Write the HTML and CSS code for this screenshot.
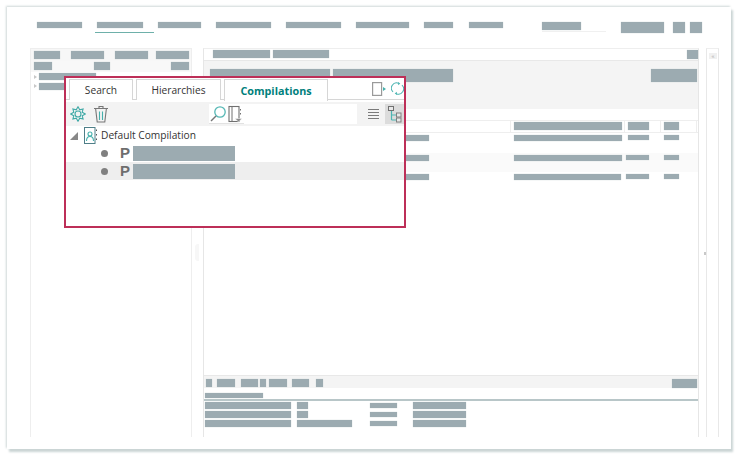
FILE: index.html
```html
<!DOCTYPE html>
<html lang="en">
<head>
<meta charset="utf-8">
<title>Compilations</title>
<link rel="stylesheet" href="styles.css">
</head>
<body>
<div class="window">
  <header class="nav">
    <span class="bar h6 w45"></span>
    <span class="nav-active"><span class="bar h6 w46"></span></span>
    <span class="bar h6 w43 ml15"></span>
    <span class="bar h6 w55 ml15"></span>
    <span class="bar h6 w55 ml15"></span>
    <span class="bar h6 w53 ml15"></span>
    <span class="bar h6 w29 ml15"></span>
    <span class="bar h6 w34 ml16"></span>
    <span class="nav-search"><span class="bar h8 w39"></span></span>
    <span class="bar h11 w43 ml15"></span>
    <span class="bar h11 w12 ml9"></span>
    <span class="bar h11 w12 ml5"></span>
  </header>
  <main class="main">
    <aside class="left">
      <div class="left-tabs">
        <span class="bar h8 w26"></span>
        <span class="bar h8 w33 ml11"></span>
        <span class="bar h8 w33 ml11"></span>
        <span class="bar h8 w33 ml8"></span>
      </div>
      <div class="left-filter">
        <span class="bar h8 w18"></span>
        <span class="bar h8 w16 ml42"></span>
        <span class="bar h8 w18 ml61"></span>
      </div>
      <div class="left-row"><i class="tri"></i><span class="bar h7 w57"></span></div>
      <div class="left-row"><i class="tri"></i><span class="bar h7 w57"></span></div>
    </aside>
    <div class="split"><i class="handle"></i></div>
    <section class="center">
      <div class="c-head">
        <span class="bar h8 w57 ml9"></span>
        <span class="bar h8 w56 ml3"></span>
        <span class="bar h9 w11 push"></span>
      </div>
      <div class="c-band">
        <span class="bar h13 w120"></span>
        <span class="bar h13 w120 ml3"></span>
        <span class="bar h13 w46 push"></span>
      </div>
      <div class="c-gap"></div>
      <div class="t-head">
        <span class="cell c1"></span>
        <span class="cell c2"><span class="bar h8 w108"></span></span>
        <span class="cell c3"><span class="bar h8 w21"></span></span>
        <span class="cell c4"><span class="bar h8 w15"></span></span>
      </div>
      <div class="t-row">
        <span class="cell c1"><span class="bar h6 w29 ml196"></span></span>
        <span class="cell c2"><span class="bar h6 w108"></span></span>
        <span class="cell c3"><span class="bar h5 w21"></span></span>
        <span class="cell c4"><span class="bar h5 w15"></span></span>
      </div>
      <div class="t-row alt">
        <span class="cell c1"><span class="bar h6 w29 ml196"></span></span>
        <span class="cell c2"><span class="bar h6 w108"></span></span>
        <span class="cell c3w"><span class="bar h5 w23"></span></span>
        <span class="cell c4"><span class="bar h5 w15"></span></span>
      </div>
      <div class="t-row">
        <span class="cell c1"><span class="bar h6 w29 ml196"></span></span>
        <span class="cell c2"><span class="bar h6 w107"></span></span>
        <span class="cell c3w"><span class="bar h5 w23"></span></span>
        <span class="cell c4"><span class="bar h5 w15"></span></span>
      </div>
      <div class="c-fill"></div>
      <div class="pager">
        <span class="bar h8 w6"></span>
        <span class="bar h8 w18 ml5"></span>
        <span class="bar h8 w17 ml6"></span>
        <span class="bar h8 w6 ml2"></span>
        <span class="bar h8 w18 ml3"></span>
        <span class="bar h8 w17 ml5"></span>
        <span class="bar h8 w7 ml7"></span>
        <span class="bar h9 w25 push"></span>
      </div>
      <div class="caption"><span class="bar h5 w58"></span></div>
      <div class="detail">
        <div class="d-row">
          <span class="bar h7 w86"></span><span class="bar h7 w11 ml6"></span><span class="bar h5 w27 d3a"></span><span class="bar h7 w53 ml16"></span>
        </div>
        <div class="d-row">
          <span class="bar h7 w86"></span><span class="bar h7 w11 ml6"></span><span class="bar h5 w27 d3a"></span><span class="bar h7 w53 ml16"></span>
        </div>
        <div class="d-row">
          <span class="bar h7 w86"></span><span class="bar h7 w55 ml6"></span><span class="bar h5 w27 d3b"></span><span class="bar h7 w53 ml16"></span>
        </div>
      </div>
    </section>
    <div class="split narrow"><i class="tick"></i></div>
    <aside class="right"><i class="collapse">«</i></aside>
  </main>

  <div class="popup">
    <div class="tabs">
      <div class="tab t-search">Search</div>
      <div class="tab t-hier">Hierarchies</div>
      <div class="tab t-comp">Compilations</div>
      <div class="tab-tools">
        <svg class="ico-export" viewBox="0 0 14 14" width="14" height="14"><rect x=".6" y=".6" width="9" height="12.8" fill="#fff" stroke="#9a9a9a" stroke-width="1.2"/><path d="M11 5l3 2-3 2z" fill="#45b0ac"/></svg>
        <svg class="ico-refresh" viewBox="0 0 14 14" width="13" height="13"><path d="M2.2 10.6A5.6 5.6 0 0 1 8.3 1.4M11.8 3.4A5.6 5.6 0 0 1 5.7 12.6" fill="none" stroke="#4db5b2" stroke-width="1.1"/><path d="M7.5 0l2.5 1.6L7.8 3.4zM6.5 14L4 12.4l2.2-1.8z" fill="#4db5b2"/></svg>
      </div>
    </div>
    <div class="toolbar">
      <svg class="i-gear" viewBox="0 0 16 16" width="16" height="16"><path d="M8 .8L9.76 3.75 13.09 2.91 12.25 6.24 15.2 8 12.25 9.76 13.09 13.09 9.76 12.25 8 15.2 6.24 12.25 2.91 13.09 3.75 9.76.8 8 3.75 6.24 2.91 2.91 6.24 3.75z" fill="none" stroke="#3fa9a6" stroke-width="1.1"/><circle cx="8" cy="8" r="3" fill="none" stroke="#3fa9a6" stroke-width="1.1"/></svg>
      <svg class="i-trash" viewBox="0 0 16 18" width="16" height="18"><path d="M1 3.5h14M6 3.5V1.5h4v2M2.6 3.5l1.6 13.5h7.6l1.6-13.5" fill="none" stroke="#777" stroke-width="1.1"/><path d="M6.5 6.5v8.5M9.5 6.5v8.5" stroke="#45b0ac" stroke-width="1.1"/></svg>
      <div class="search-box">
        <div class="search-icons">
          <svg viewBox="0 0 18 18" width="18" height="18"><circle cx="11" cy="7" r="5.2" fill="none" stroke="#55b8b5" stroke-width="1.3"/><path d="M7 11l-5 5" stroke="#777" stroke-width="1.4"/></svg>
          <svg viewBox="0 0 15 18" width="15" height="18"><rect x="1" y="1.5" width="10" height="15" fill="#fff" stroke="#707070" stroke-width="1.1"/><path d="M4 1.5v15" stroke="#707070"/><path d="M12.5 4v1.5M12.5 8v1.5" stroke="#707070"/><path d="M7 13.5h7l-3.5 3.5z" fill="#8a8a8a" stroke="#fff" stroke-width=".5"/></svg>
        </div>
      </div>
      <div class="list-btn">
        <svg viewBox="0 0 11 12" width="11" height="12"><path d="M0 1.5h11M0 4.5h11M0 7.5h11M0 10.5h11" stroke="#7a7a7a"/></svg>
      </div>
      <div class="tree-btn">
        <svg viewBox="0 0 14 17" width="14" height="17"><path d="M3.5 4v10M3.5 9h6M3.5 14h6" stroke="#4db5b2" stroke-width="1.2" fill="none"/><rect x=".5" y=".5" width="5" height="4" fill="#e8e8e8" stroke="#707070"/><rect x="8.5" y="7" width="4.5" height="4" fill="#e8e8e8" stroke="#808080"/><rect x="8.5" y="12" width="4.5" height="4" fill="#e8e8e8" stroke="#808080"/></svg>
      </div>
    </div>
    <div class="tree-root">
      <i class="expander"></i>
      <svg class="i-book" viewBox="0 0 14 17" width="14" height="17"><rect x=".5" y=".5" width="10.5" height="16" fill="#fff" stroke="#4f7f88"/><circle cx="6" cy="7" r="2" fill="none" stroke="#45b0ac" stroke-width="1.1"/><path d="M2.5 14c0-6 7-6 7 0" fill="none" stroke="#45b0ac" stroke-width="1.1"/><path d="M12.5 2.5v1.5M12.5 7v1.5M12.5 11.5V13" stroke="#555"/></svg>
      <span class="root-label">Default Compilation</span>
    </div>
    <div class="leaf"><i class="dot"></i><b class="p">P</b><span class="bar leaf-bar"></span></div>
    <div class="leaf hover"><i class="dot"></i><b class="p">P</b><span class="bar leaf-bar"></span></div>
  </div>
</div>
</body>
</html>
```

FILE: styles.css
```css
* { box-sizing: border-box; }
html, body { margin: 0; padding: 0; }
body {
  width: 741px;
  height: 459px;
  background: #fff;
  overflow: hidden;
  font-family: "Open Sans", "Noto Sans", sans-serif;
  padding: 7px 10px 10px 7px;
}
.window {
  position: relative;
  width: 724px;
  height: 442px;
  background: #fff;
  box-shadow: 2px 3px 2px #cbd5d5, -1px -1px 2px #cfd8d8;
  display: flex;
  flex-direction: column;
}
i { display: block; font-style: normal; }

.bar {
  display: block;
  flex: none;
  background: #9cabb1;
  box-shadow: 0 0 1px #c3ced1;
}
.h5 { height: 5px; } .h6 { height: 6px; } .h7 { height: 7px; } .h8 { height: 8px; }
.h9 { height: 9px; } .h11 { height: 11px; } .h13 { height: 13px; }
.w6 { width: 6px; } .w7 { width: 7px; } .w11 { width: 11px; } .w12 { width: 12px; }
.w15 { width: 15px; } .w16 { width: 16px; } .w17 { width: 17px; } .w18 { width: 18px; }
.w21 { width: 21px; } .w23 { width: 23px; } .w25 { width: 25px; } .w26 { width: 26px; }
.w27 { width: 27px; } .w29 { width: 29px; } .w33 { width: 33px; } .w34 { width: 34px; }
.w39 { width: 39px; } .w43 { width: 43px; } .w45 { width: 45px; } .w46 { width: 46px; }
.w53 { width: 53px; } .w55 { width: 55px; } .w56 { width: 56px; } .w57 { width: 57px; }
.w58 { width: 58px; } .w86 { width: 86px; } .w107 { width: 107px; } .w108 { width: 108px; }
.w120 { width: 120px; }
.ml2 { margin-left: 2px; } .ml3 { margin-left: 3px; } .ml5 { margin-left: 5px; }
.ml6 { margin-left: 6px; } .ml7 { margin-left: 7px; } .ml8 { margin-left: 8px; }
.ml9 { margin-left: 9px; } .ml11 { margin-left: 11px; } .ml15 { margin-left: 15px; }
.ml16 { margin-left: 16px; } .ml42 { margin-left: 42px; } .ml61 { margin-left: 61px; }
.ml196 { margin-left: 196px; }
.push { margin-left: auto; }

/* top navigation */
.nav {
  flex: none;
  height: 41px;
  padding: 15px 0 0 30px;
  display: flex;
  align-items: flex-start;
}
.nav-active {
  margin-left: 13px;
  width: 59px;
  height: 11px;
  padding-left: 2px;
  border-bottom: 1px solid #6eb0aa;
}
.nav-active + .bar { margin-left: 4px; }
.nav-search {
  width: 64px;
  height: 10px;
  margin-left: 39px;
  border-bottom: 1px solid #f0f0f0;
}

/* main columns */
.main {
  flex: none;
  height: 389px;
  margin-left: 23px;
  display: flex;
}
.left {
  flex: none;
  width: 162px;
  border-left: 1px solid #eee;
  border-right: 1px solid #eee;
}
.left-tabs {
  height: 13px;
  padding: 2px 0 0 3px;
  display: flex;
  background: #f7f7f7;
  border-top: 1px solid #eee;
}
.left-filter {
  height: 11px;
  padding: 1px 0 0 3px;
  display: flex;
  background: #f8f8f8;
}
.left-row {
  height: 9.5px;
  display: flex;
  align-items: center;
  padding-left: 3px;
}
.tri {
  width: 0;
  height: 0;
  margin-right: 2px;
  border-left: 3px solid #c8c8c8;
  border-top: 2px solid transparent;
  border-bottom: 2px solid transparent;
}
.split {
  flex: none;
  width: 11px;
  display: flex;
  align-items: center;
  justify-content: center;
  padding-right: 2px;
}
.split.narrow { width: 7px; justify-content: flex-end; padding-right: 0; }
.handle {
  width: 4px;
  height: 17px;
  margin-top: 20px;
  background: #f7f7f7;
  border-radius: 3px 0 0 3px;
}
.tick {
  width: 2px;
  height: 3px;
  margin-top: 22px;
  background: #c8c8c8;
}
.center {
  flex: none;
  width: 496px;
  border-left: 1px solid #e6e6e6;
  border-right: 1px solid #e6e6e6;
  border-top: 1px solid #eee;
  display: flex;
  flex-direction: column;
}
.right {
  flex: none;
  width: 13px;
  border-left: 1px solid #e8e8e8;
  border-right: 1px solid #e8e8e8;
  border-top: 1px solid #eee;
  padding: 4px 0 0 2px;
}
.collapse {
  width: 8px;
  height: 6px;
  background: #f0f0f0;
  color: #a8a8a8;
  font-size: 6px;
  line-height: 6px;
  text-align: center;
}

/* centre panel */
.c-head {
  flex: none;
  height: 11px;
  display: flex;
  align-items: flex-start;
  padding-top: 1px;
}
.c-band {
  flex: none;
  height: 49px;
  padding: 8px 1px 0 6px;
  display: flex;
  align-items: flex-start;
  background: #f4f4f4;
  border-top: 1px solid #e8e8e8;
}
.c-gap { flex: none; height: 11px; }
.t-head {
  flex: none;
  height: 13px;
  display: flex;
  align-items: center;
  border-top: 1px solid #eee;
  border-bottom: 1px solid #eee;
}
.cell { display: block; flex: none; }
.c1 { width: 307px; }
.c2 { width: 114px; padding-left: 3px; }
.c3 { width: 36px; padding-left: 3px; }
.c3w { width: 36px; padding-left: 1px; }
.c4 { width: 36px; padding-left: 3px; }
.t-head .cell { height: 11px; padding-top: 1px; border-right: 1px solid #eee; }
.t-row {
  flex: none;
  height: 19.5px;
  padding-top: 2px;
  display: flex;
  align-items: flex-start;
}
.t-row.alt { background: #fafafa; }
.c-fill { flex: 1; }
.pager {
  flex: none;
  height: 13px;
  padding: 3px 1px 0 2px;
  display: flex;
  align-items: flex-start;
  background: #f4f4f4;
  border-top: 1px solid #e8e8e8;
}
.caption {
  flex: none;
  height: 13px;
  padding: 5px 0 0 1px;
  border-bottom: 2px solid #b8c6c8;
}
.detail {
  flex: none;
  height: 36px;
  padding: 1px 0 0 1px;
  display: flex;
  flex-direction: column;
  gap: 2px;
}
.d-row { height: 7px; display: flex; align-items: center; }
.d3a { margin-left: 62px; }
.d3b { margin-left: 18px; }

/* floating compilations panel */
.popup {
  position: absolute;
  left: 57px;
  top: 69px;
  width: 342px;
  height: 152px;
  background: #fff;
  border: 2px solid #bd2f58;
  display: flex;
  flex-direction: column;
}
.tabs {
  flex: none;
  height: 22px;
  padding: 1px 0 0 3px;
  display: flex;
  gap: 3px;
  border-bottom: 1px solid #d6d6d6;
}
.tab {
  height: 21px;
  border: 1px solid #d6d6d6;
  border-bottom: 0;
  display: flex;
  align-items: center;
  justify-content: center;
  font-size: 10.2px;
  color: #333;
  background: #fff;
}
.t-search { width: 64px; }
.t-hier { width: 85px; }
.t-comp {
  width: 104px;
  height: 22px;
  font-size: 10.8px;
  font-weight: 700;
  color: #00807c;
}
.tab-tools {
  flex: 1;
  display: flex;
  justify-content: flex-end;
  align-items: center;
  padding: 0 0 1px 0;
}
.ico-export { flex: none; margin-right: 5px; }
.ico-refresh { flex: none; }
.toolbar {
  flex: none;
  height: 24px;
  margin-top: 2px;
  background: #f3f3f3;
  display: flex;
  align-items: center;
  padding-left: 4px;
}
.i-gear { flex: none; }
.i-trash { flex: none; margin-left: 7px; }
.search-box {
  flex: none;
  width: 148px;
  height: 20px;
  margin-left: 100px;
  background: #fff;
}
.search-icons {
  width: 35px;
  height: 20px;
  padding-top: 1px;
  display: flex;
  gap: 1px;
  border-bottom: 1px solid #e2e2e2;
}
.search-icons svg { flex: none; }
.list-btn {
  flex: none;
  width: 11px;
  height: 12px;
  margin-left: 11px;
  line-height: 0;
}
.tree-btn {
  flex: none;
  width: 19px;
  height: 20px;
  margin-left: 6px;
  background: #dcdcdc;
  display: flex;
  align-items: center;
  justify-content: center;
}
.tree-root {
  flex: none;
  height: 18px;
  display: flex;
  align-items: center;
  padding-left: 4px;
}
.expander {
  width: 0;
  height: 0;
  border-right: 8px solid #888;
  border-top: 8px solid transparent;
  margin-top: 2px;
}
.i-book { flex: none; margin-left: 6px; }
.root-label {
  margin-left: 3px;
  font-size: 10.2px;
  color: #333;
}
.leaf {
  flex: none;
  height: 18px;
  display: flex;
  align-items: center;
  padding-left: 35px;
}
.leaf.hover { background: #eee; }
.dot {
  width: 7px;
  height: 7px;
  border-radius: 50%;
  background: #808080;
}
.p {
  width: 13px;
  margin-left: 12px;
  font-family: "Liberation Sans", sans-serif;
  font-size: 15px;
  line-height: 16px;
  font-weight: 700;
  color: #6e6e6e;
}
.leaf-bar {
  width: 102px;
  height: 15px;
  box-shadow: none;
}
```
